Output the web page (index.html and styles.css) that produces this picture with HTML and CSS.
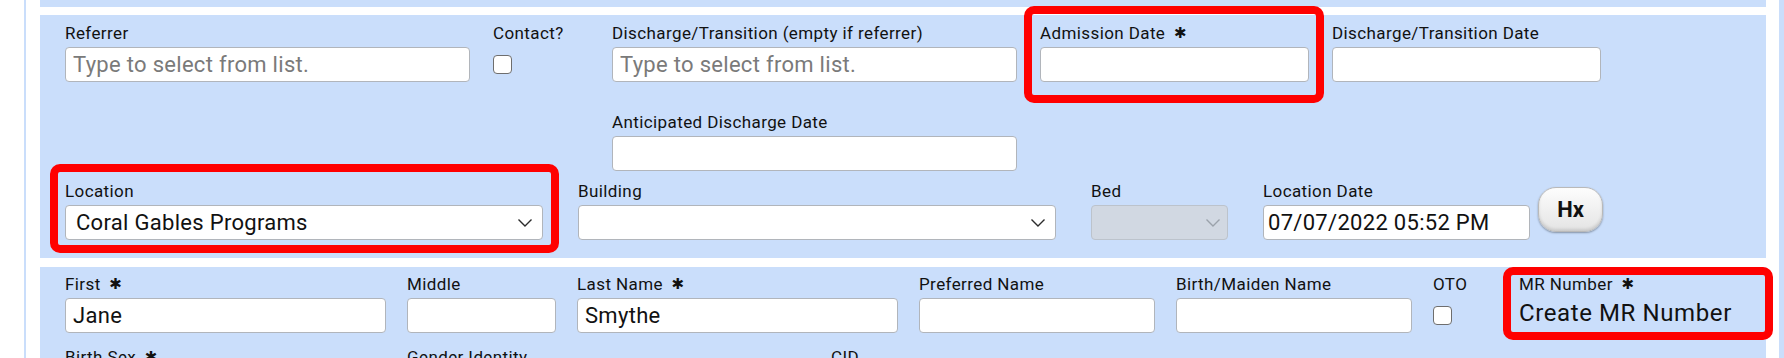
FILE: index.html
```html
<!DOCTYPE html>
<html lang="en">
<head>
    <meta charset="UTF-8">
    <title>Admission</title>
    <link rel="stylesheet" href="styles.css">
</head>
<body>
    <div class="page">
        <div class="panel panel-tail"></div>

        <section class="panel panel-admit">
            <div class="row">
                <div class="field f-wide">
                    <label>Referrer</label>
                    <input class="text" type="text" placeholder="Type to select from list.">
                </div>
                <div class="field f-contact">
                    <label>Contact?</label>
                    <div class="check-box"><input class="check" type="checkbox"></div>
                </div>
                <div class="field f-wide">
                    <label>Discharge/Transition (empty if referrer)</label>
                    <input class="text" type="text" placeholder="Type to select from list.">
                </div>
                <div class="field f-date">
                    <label>Admission Date <span class="req">&#x2731;</span></label>
                    <input class="text" type="text">
                </div>
                <div class="field f-date">
                    <label>Discharge/Transition Date</label>
                    <input class="text" type="text">
                </div>
            </div>

            <div class="row row-second">
                <div class="field f-wide f-anticipated">
                    <label>Anticipated Discharge Date</label>
                    <input class="text" type="text">
                </div>
            </div>

            <div class="row row-location">
                <div class="field f-location">
                    <label>Location</label>
                    <div class="select">
                        <span>Coral Gables Programs</span>
                        <svg width="16" height="10" viewBox="0 0 16 10"><path d="M1.5 1.5 L8 8 L14.5 1.5" fill="none" stroke="#2b2b2b" stroke-width="1.4"/></svg>
                    </div>
                </div>
                <div class="field f-location">
                    <label>Building</label>
                    <div class="select">
                        <span></span>
                        <svg width="16" height="10" viewBox="0 0 16 10"><path d="M1.5 1.5 L8 8 L14.5 1.5" fill="none" stroke="#2b2b2b" stroke-width="1.4"/></svg>
                    </div>
                </div>
                <div class="field f-bed">
                    <label>Bed</label>
                    <div class="select disabled">
                        <span></span>
                        <svg width="16" height="10" viewBox="0 0 16 10"><path d="M1.5 1.5 L8 8 L14.5 1.5" fill="none" stroke="#9ba2ab" stroke-width="1.4"/></svg>
                    </div>
                </div>
                <div class="field f-locdate">
                    <label>Location Date</label>
                    <input class="text text-tight" type="text" value="07/07/2022 05:52 PM">
                </div>
                <button class="hx">Hx</button>
            </div>
        </section>

        <section class="panel panel-person">
            <div class="row row-names">
                <div class="field f-name">
                    <label>First <span class="req">&#x2731;</span></label>
                    <input class="text" type="text" value="Jane">
                </div>
                <div class="field f-middle">
                    <label>Middle</label>
                    <input class="text" type="text">
                </div>
                <div class="field f-name">
                    <label>Last Name <span class="req">&#x2731;</span></label>
                    <input class="text" type="text" value="Smythe">
                </div>
                <div class="field f-alt">
                    <label>Preferred Name</label>
                    <input class="text" type="text">
                </div>
                <div class="field f-alt">
                    <label>Birth/Maiden Name</label>
                    <input class="text" type="text">
                </div>
                <div class="field f-oto">
                    <label>OTO</label>
                    <div class="check-box"><input class="check" type="checkbox"></div>
                </div>
                <div class="field f-mr">
                    <label>MR Number <span class="req">&#x2731;</span></label>
                    <div class="mr-link">Create MR Number</div>
                </div>
            </div>

            <div class="row row-names row-next">
                <div class="field f-name">
                    <label>Birth Sex <span class="req">&#x2731;</span></label>
                </div>
                <div class="field f-gender">
                    <label>Gender Identity</label>
                </div>
                <div class="field">
                    <label>CID</label>
                </div>
            </div>
        </section>
    </div>

    <!-- highlight boxes drawn over the form -->
    <div class="callout callout-admission"></div>
    <div class="callout callout-location"></div>
    <div class="callout callout-mr"></div>
</body>
</html>
```

FILE: styles.css
```css
html, body {
    margin: 0;
    padding: 0;
    overflow: hidden;
    background: #fff;
    color: #111;
    font-family: Roboto, "Liberation Sans", sans-serif;
}

body {
    position: relative;
    height: 358px;
}

.page {
    margin-left: 24px;
    width: 1726px;
    padding: 0 13px 0 14px;
    border-left: 2px solid #cadefb;
    border-right: 5px solid #cadefb;
    min-height: 358px;
}

.panel {
    background-color: #cadefb;
}

.panel-tail {
    height: 7px;
    margin-bottom: 8px;
}

.panel-admit {
    padding: 8px 0 18px 25px;
    margin-bottom: 9px;
}

.panel-person {
    padding: 7px 0 30px 25px;
}

.row {
    display: flex;
    flex-direction: row;
    gap: 23px;
}

.row-second {
    margin-top: 30px;
}

.row-location {
    margin-top: 10px;
    gap: 35px;
    align-items: flex-end;
}

.row-names {
    gap: 21px;
}

.row-next {
    margin-top: 14px;
}

.field label {
    display: block;
    font-size: 17px;
    line-height: 20px;
    height: 20px;
    margin-bottom: 4px;
    letter-spacing: 0.4px;
    white-space: nowrap;
}

.req {
    font-family: "DejaVu Sans", sans-serif;
    font-size: 15px;
    margin-left: 4px;
    position: relative;
    top: -1px;
}

.text {
    display: block;
    box-sizing: border-box;
    width: 100%;
    height: 35px;
    margin: 0;
    padding: 0 7px;
    border: 1px solid #b1b5bb;
    border-radius: 4px;
    background: #fff;
    font-family: Roboto, "Liberation Sans", sans-serif;
    font-size: 22px;
    letter-spacing: 0.3px;
    color: #111;
    outline: none;
}

.text::placeholder {
    color: #7a7a7a;
}

.text-tight {
    padding: 0 4px;
}

.select {
    box-sizing: border-box;
    height: 35px;
    display: flex;
    flex-direction: row;
    align-items: center;
    justify-content: space-between;
    padding: 0 9px 0 10px;
    border: 1px solid #b1b5bb;
    border-radius: 4px;
    background: #fff;
    font-size: 22px;
    letter-spacing: 0.3px;
}

.select.disabled {
    background: #d1d8e2;
    border-color: #bcc3cc;
    padding-right: 6px;
}

.check-box {
    height: 35px;
    display: flex;
    align-items: center;
}

.check {
    appearance: none;
    -webkit-appearance: none;
    box-sizing: border-box;
    width: 19px;
    height: 19px;
    margin: 0;
    border: 1.5px solid #6e6e6e;
    border-radius: 4px;
    background: #fff;
}

.f-wide { width: 405px; }
.f-contact { width: 96px; }
.f-date { width: 269px; }
.f-anticipated { margin-left: 547px; }
.f-location { width: 478px; }
.f-bed { width: 137px; }
.f-locdate { width: 267px; }
.f-name { width: 321px; }
.f-middle { width: 149px; }
.f-alt { width: 236px; }
.f-oto { width: 65px; }
.f-gender { width: 403px; }

.mr-link {
    font-size: 24px;
    line-height: 30px;
    letter-spacing: 0.6px;
    white-space: nowrap;
    color: #111;
}

.hx {
    align-self: center;
    margin-left: -27px;
    margin-bottom: 3px;
    width: 65px;
    height: 45px;
    border: 1px solid #b9b9b9;
    border-radius: 18px;
    background: linear-gradient(#fdfdfd, #e4e4e4);
    box-shadow: inset 0 -2px 3px rgba(0, 0, 0, 0.12), 0 1px 2px rgba(0, 0, 0, 0.35);
    font-family: Roboto, "Liberation Sans", sans-serif;
    font-weight: bold;
    font-size: 22px;
    color: #111;
    padding: 0;
}

.callout {
    position: absolute;
    box-sizing: border-box;
    border: 8px solid #ff0000;
    border-radius: 10px;
}

.callout-admission {
    left: 1024px;
    top: 6px;
    width: 300px;
    height: 97px;
}

.callout-location {
    left: 50px;
    top: 164px;
    width: 509px;
    height: 89px;
}

.callout-mr {
    left: 1503px;
    top: 267px;
    width: 270px;
    height: 73px;
}
```
